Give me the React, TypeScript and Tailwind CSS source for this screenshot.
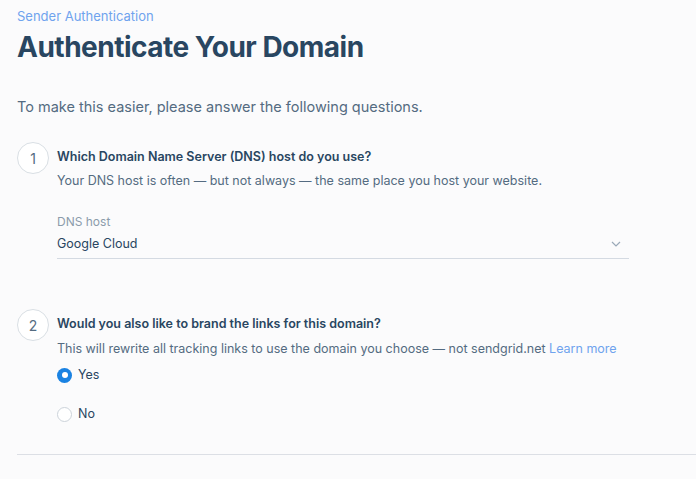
import React from 'react';

function StepCircle({ n }: { n: number }) {
  return (
    <div className="w-[32px] h-[32px] shrink-0 rounded-full border border-[#d9dfe4] bg-white flex items-center justify-center text-[14px] text-[#546b81]">
      {n}
    </div>
  );
}

function Radio({ checked, label }: { checked?: boolean; label: string }) {
  return (
    <label className="flex items-center gap-[6px] text-[12.5px] text-[#294661]">
      {checked ? (
        <span className="w-[15px] h-[15px] rounded-full bg-[#1a82e2] flex items-center justify-center">
          <span className="w-[6px] h-[6px] rounded-full bg-white" />
        </span>
      ) : (
        <span className="w-[15px] h-[15px] rounded-full border border-[#ccd3da] bg-white" />
      )}
      {label}
    </label>
  );
}

export default function App() {
  return (
    <div className="min-h-screen w-full bg-[#fbfbfc] font-['Inter',sans-serif] overflow-hidden">
      <div className="pl-[17px] pt-[8px]">
        <a className="text-[13px] text-[#6fa3ee] leading-[16px] block">Sender Authentication</a>
        <h1 className="mt-[5px] text-[28px] leading-[36px] font-bold tracking-[-0.5px] text-[#294661]">
          Authenticate Your Domain
        </h1>
        <p className="mt-[32px] text-[14.5px] leading-[20px] text-[#546b81]">
          To make this easier, please answer the following questions.
        </p>

        {/* Step 1 */}
        <div className="mt-[25px] flex gap-[8px]">
          <StepCircle n={1} />
          <div className="pt-[6px] w-[572px]">
            <div className="text-[12.5px] font-semibold leading-[18px] text-[#294661]">
              Which Domain Name Server (DNS) host do you use?
            </div>
            <div className="mt-[6px] text-[12.5px] leading-[18px] text-[#546b81]">
              Your DNS host is often — but not always — the same place you host your website.
            </div>
            <div className="mt-[24px] text-[12px] leading-[16px] text-[#8b9bab]">DNS host</div>
            <div className="mt-[5px] flex items-center justify-between border-b border-[#d4dae2] pb-[5px]">
              <span className="text-[12.5px] leading-[18px] text-[#294661]">Google Cloud</span>
              <svg width="10" height="6" viewBox="0 0 10 6" className="mr-[8px]">
                <path d="M1 1l4 4 4-4" fill="none" stroke="#9aa9b8" strokeWidth="1.2" />
              </svg>
            </div>
          </div>
        </div>

        {/* Step 2 */}
        <div className="mt-[50px] flex gap-[8px]">
          <StepCircle n={2} />
          <div className="pt-[6px]">
            <div className="text-[12.5px] font-semibold leading-[18px] text-[#294661]">
              Would you also like to brand the links for this domain?
            </div>
            <div className="mt-[7px] text-[12.5px] leading-[18px] text-[#546b81]">
              This will rewrite all tracking links to use the domain you choose — not sendgrid.net{' '}
              <a className="text-[#6fa3ee]">Learn more</a>
            </div>
            <div className="mt-[8px] flex flex-col gap-[20px]">
              <Radio checked label="Yes" />
              <Radio label="No" />
            </div>
          </div>
        </div>

        <div className="mt-[30px] border-t border-[#dcdfe5]" />
      </div>
    </div>
  );
}
